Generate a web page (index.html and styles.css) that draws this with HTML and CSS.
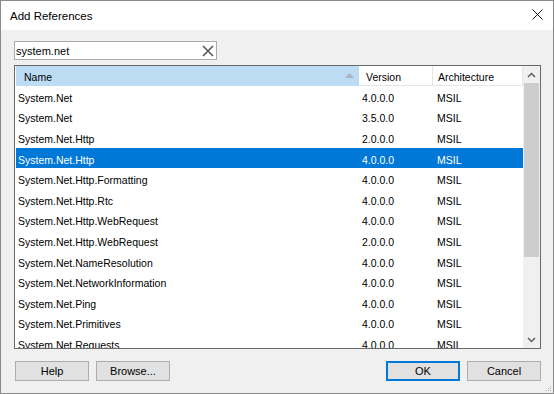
FILE: index.html
```html
<!DOCTYPE html>
<html lang="en">
<head>
    <meta charset="UTF-8">
    <title>Add References</title>
    <link rel="stylesheet" href="styles.css">
</head>
<body>
    <div class="window">
        <div class="titlebar">
            <span class="title">Add References</span>
            <svg class="close" width="11" height="11" viewBox="0 0 11 11">
                <path d="M0.5 0.5 L10.5 10.5 M10.5 0.5 L0.5 10.5" stroke="#1a1a1a" stroke-width="1"/>
            </svg>
        </div>
        <div class="content">
            <div class="search">
                <span class="search-text">system.net</span>
                <svg class="clear" width="12" height="12" viewBox="0 0 12 12">
                    <path d="M1 1 L11 11 M11 1 L1 11" stroke="#555" stroke-width="1.6"/>
                </svg>
            </div>
            <div class="list">
                <div class="table">
                    <div class="header">
                        <div class="col name sorted">Name
                            <svg class="sort" width="9" height="5" viewBox="0 0 9 5"><path d="M0 5 L4.5 0 L9 5 Z" fill="#a8b4c2"/></svg>
                        </div>
                        <div class="col version">Version</div>
                        <div class="col arch">Architecture</div>
                    </div>
                    <div class="rows">
                        <div class="row"><span>System.Net</span><span>4.0.0.0</span><span>MSIL</span></div>
                        <div class="row"><span>System.Net</span><span>3.5.0.0</span><span>MSIL</span></div>
                        <div class="row"><span>System.Net.Http</span><span>2.0.0.0</span><span>MSIL</span></div>
                        <div class="row selected"><span>System.Net.Http</span><span>4.0.0.0</span><span>MSIL</span></div>
                        <div class="row"><span>System.Net.Http.Formatting</span><span>4.0.0.0</span><span>MSIL</span></div>
                        <div class="row"><span>System.Net.Http.Rtc</span><span>4.0.0.0</span><span>MSIL</span></div>
                        <div class="row"><span>System.Net.Http.WebRequest</span><span>4.0.0.0</span><span>MSIL</span></div>
                        <div class="row"><span>System.Net.Http.WebRequest</span><span>2.0.0.0</span><span>MSIL</span></div>
                        <div class="row"><span>System.Net.NameResolution</span><span>4.0.0.0</span><span>MSIL</span></div>
                        <div class="row"><span>System.Net.NetworkInformation</span><span>4.0.0.0</span><span>MSIL</span></div>
                        <div class="row"><span>System.Net.Ping</span><span>4.0.0.0</span><span>MSIL</span></div>
                        <div class="row"><span>System.Net.Primitives</span><span>4.0.0.0</span><span>MSIL</span></div>
                        <div class="row"><span>System.Net.Requests</span><span>4.0.0.0</span><span>MSIL</span></div>
                    </div>
                </div>
                <div class="scrollbar">
                    <svg class="arrow" width="9" height="6" viewBox="0 0 9 6"><path d="M1 5 L4.5 1.5 L8 5" stroke="#606060" stroke-width="1.5" fill="none"/></svg>
                    <div class="track"><div class="thumb"></div></div>
                    <svg class="arrow" width="9" height="6" viewBox="0 0 9 6"><path d="M1 1 L4.5 4.5 L8 1" stroke="#606060" stroke-width="1.5" fill="none"/></svg>
                </div>
            </div>
            <div class="buttons">
                <div class="group">
                    <button>Help</button>
                    <button>Browse...</button>
                </div>
                <div class="group">
                    <button class="default">OK</button>
                    <button>Cancel</button>
                </div>
            </div>
        </div>
        <svg class="grip" width="7" height="7" viewBox="0 0 7 7">
            <rect x="5" y="1" width="1" height="1" fill="#b8b8b8"/>
            <rect x="3" y="3" width="1" height="1" fill="#b8b8b8"/>
            <rect x="5" y="3" width="1" height="1" fill="#b8b8b8"/>
            <rect x="1" y="5" width="1" height="1" fill="#b8b8b8"/>
            <rect x="3" y="5" width="1" height="1" fill="#b8b8b8"/>
            <rect x="5" y="5" width="1" height="1" fill="#b8b8b8"/>
        </svg>
    </div>
</body>
</html>
```

FILE: styles.css
```css
body {
    margin: 0;
    font-family: "Liberation Sans", Arial, sans-serif;
    color: #000;
}
.window {
    position: relative;
    width: 554px;
    height: 394px;
    box-sizing: border-box;
    border: 1px solid #8a8a8a;
    background: #f0f0f0;
    display: flex;
    flex-direction: column;
}
.titlebar {
    height: 29px;
    background: #fff;
    display: flex;
    align-items: center;
    justify-content: space-between;
    padding: 0 10px 0 9px;
}
.title {
    font-size: 11.5px;
    margin-top: 1px;
}
.close {
    margin-top: -2px;
}
.content {
    padding: 11px 12px 0 13px;
    font-size: 10.5px;
}
.search {
    width: 203px;
    height: 19px;
    box-sizing: border-box;
    border: 1px solid #ababab;
    background: #fff;
    display: flex;
    align-items: center;
    justify-content: space-between;
    padding: 0 2px 0 1px;
}
.search-text {
    font-size: 11px;
    margin-top: 1px;
}
.list {
    margin-top: 5px;
    width: 527px;
    height: 284px;
    box-sizing: border-box;
    border: 1px solid #6a6a6a;
    background: #fff;
    display: flex;
    padding-left: 1px;
    overflow: hidden;
}
.table {
    width: 507px;
    overflow: hidden;
}
.header {
    display: grid;
    grid-template-columns: 344px 73px 90px;
    height: 20px;
}
.col {
    box-sizing: border-box;
    border-right: 1px solid #e5e5e5;
    border-bottom: 1px solid #e5e5e5;
    display: flex;
    align-items: center;
    padding-top: 2px;
    padding-left: 6px;
}
.name {
    padding-left: 8px;
    justify-content: space-between;
    padding-right: 5px;
}
.sorted {
    background: #bcdcf4;
    border-color: #bcdcf4;
    border-right-color: #fff;
}
.sort {
    margin-top: -2px;
}
.version {
    padding-left: 6px;
}
.arch {
    padding-left: 5px;
}
.row {
    display: grid;
    grid-template-columns: 344px 73px 90px;
    height: 20.6px;
    align-items: center;
}
.row span {
    padding-left: 2px;
    padding-top: 3px;
}
.row span:nth-child(3) {
    padding-left: 4px;
}
.row.selected {
    background: #0078d7;
    color: #fff;
}
.scrollbar {
    width: 17px;
    background: #f0f0f0;
    display: flex;
    flex-direction: column;
    align-items: center;
}
.arrow {
    flex: none;
    margin: 6px 0 5px;
}
.track {
    flex: 1;
    width: 100%;
    display: flex;
    justify-content: center;
}
.thumb {
    width: 15px;
    height: 174px;
    background: #cdcdcd;
}
.buttons {
    margin-top: 12px;
    margin-left: 1px;
    width: 526px;
    display: flex;
    justify-content: space-between;
}
.group {
    display: flex;
    gap: 7px;
}
button {
    width: 74px;
    height: 20px;
    box-sizing: border-box;
    background: #e1e1e1;
    border: 1px solid #adadad;
    font-family: "Liberation Sans", Arial, sans-serif;
    font-size: 11px;
    color: #000;
    padding: 0;
}
button.default {
    border: 2px solid #0078d7;
}
.grip {
    position: absolute;
    right: 1px;
    bottom: 1px;
}
```
